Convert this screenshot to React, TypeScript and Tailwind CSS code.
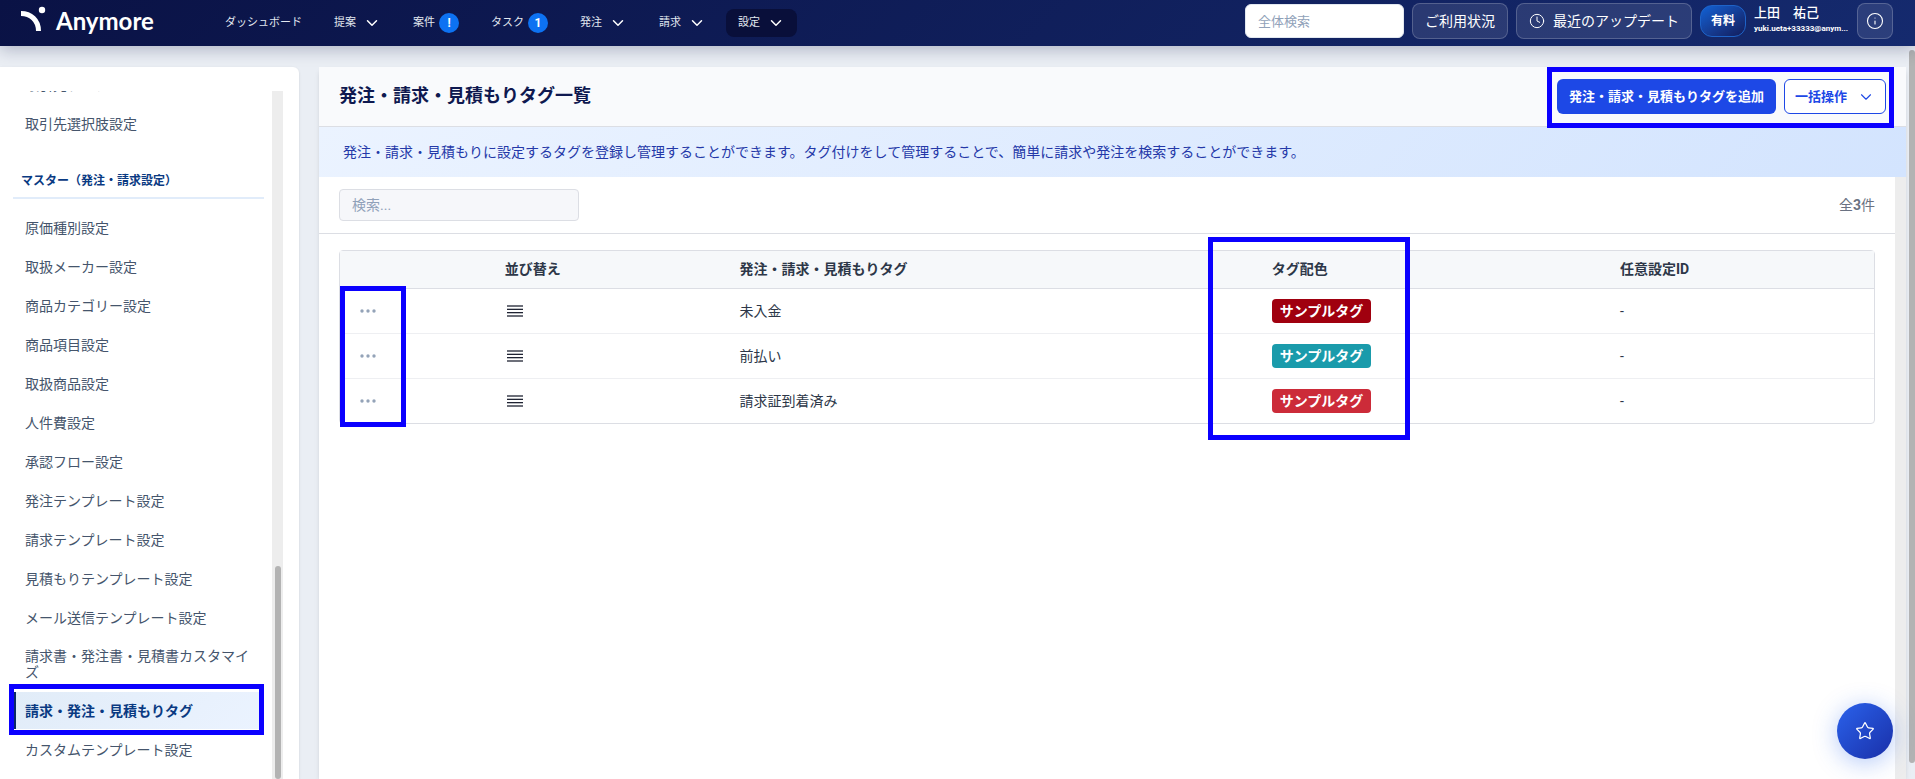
import React, { useState } from 'react';
import { ChevronDown, Clock, Info, Star } from 'lucide-react';

interface NavItem {
  label: string;
  badge?: string;
  menu?: boolean;
  active?: boolean;
}

interface Tag {
  id: number;
  name: string;
  color: string;
}

const navItems: NavItem[] = [
  { label: 'ダッシュボード' },
  { label: '提案', menu: true },
  { label: '案件', badge: '!' },
  { label: 'タスク', badge: '1' },
  { label: '発注', menu: true },
  { label: '請求', menu: true },
  { label: '設定', menu: true, active: true },
];

const masterLinks = [
  '原価種別設定',
  '取扱メーカー設定',
  '商品カテゴリー設定',
  '商品項目設定',
  '取扱商品設定',
  '人件費設定',
  '承認フロー設定',
  '発注テンプレート設定',
  '請求テンプレート設定',
  '見積もりテンプレート設定',
  'メール送信テンプレート設定',
  '請求書・発注書・見積書カスタマイズ',
  '請求・発注・見積もりタグ',
  'カスタムテンプレート設定',
];

const currentLink = '請求・発注・見積もりタグ';

const tags: Tag[] = [
  { id: 1, name: '未入金', color: 'bg-[#a0000f]' },
  { id: 2, name: '前払い', color: 'bg-[#1a9bab]' },
  { id: 3, name: '請求証到着済み', color: 'bg-[#cc2b39]' },
];

const Logo: React.FC = () => (
  <a href="#" className="flex items-center gap-2.5 text-white" aria-label="Anymore">
    <svg width="26" height="26" viewBox="0 0 26 26" fill="none">
      <path d="M1 7.5C10.5 7.5 18.5 14 18.5 25" stroke="currentColor" strokeWidth="5" />
      <circle cx="22" cy="4" r="3.2" fill="currentColor" />
    </svg>
    <span className="pt-1 font-[Lato] text-2xl leading-8 font-bold">Anymore</span>
  </a>
);

const DragIcon: React.FC = () => (
  <svg width="16" height="12" viewBox="0 0 16 12" fill="#1f2333">
    <path fillOpacity="0.65" d="M0 0h16v2H0zM0 10h16v2H0z" />
    <path fillOpacity="0.3" d="M0 3h16v1H0zM0 8h16v1H0z" />
    <path d="M0 4h16v1H0zM0 7h16v1H0z" />
  </svg>
);

const DotsIcon: React.FC = () => (
  <svg width="16" height="4" viewBox="0 0 16 4" fill="#94a3b8">
    <circle cx="2" cy="2" r="1.7" />
    <circle cx="8" cy="2" r="1.7" />
    <circle cx="14" cy="2" r="1.7" />
  </svg>
);

const Header: React.FC = () => (
  <header className="relative z-10 flex h-[46px] items-center justify-between bg-linear-135 from-[#0a1245] to-[#152a6e] pr-[22px] pl-5 shadow-[0_4px_16px_rgba(10,18,69,0.25)]">
    <div className="flex items-center">
      <div className="w-[193px] pb-2">
        <Logo />
      </div>
      <nav className="flex items-center gap-2">
        {navItems.map(item => (
          <a
            key={item.label}
            href="#"
            className={`flex h-7 items-center rounded-lg px-3 text-[11px] text-slate-200 ${item.active ? 'bg-[#090f3a]' : ''}`}
          >
            {item.label}
            {item.badge && (
              <span className="ml-1 flex size-5 items-center justify-center rounded-full bg-[#0d72f2] text-xs font-bold text-white">
                {item.badge}
              </span>
            )}
            {item.menu && <ChevronDown className="ml-[7px] size-[18px] text-white" strokeWidth={2} />}
          </a>
        ))}
      </nav>
    </div>
    <div className="flex items-center gap-2 pb-1 text-white">
      <input
        type="text"
        aria-label="全体検索"
        placeholder="全体検索"
        className="h-[34px] w-[159px] rounded-md border border-slate-200 bg-white px-3 text-[13px] text-slate-700 placeholder:text-slate-400"
      />
      <button className="h-9 rounded-lg border border-white/20 bg-white/10 px-3 text-sm">ご利用状況</button>
      <button className="flex h-9 items-center gap-2 rounded-lg border border-white/20 bg-white/10 px-3 text-sm">
        <Clock className="size-4" strokeWidth={1.5} />
        最近のアップデート
      </button>
      <span className="flex h-8 items-center rounded-xl border border-[#1e63c8] bg-linear-to-br from-[#0f62d6] to-[#111d5c] px-2.5 text-xs font-bold">
        有料
      </span>
      <div className="w-[95px] whitespace-nowrap">
        <p className="text-[13px] leading-4 font-medium">上田　祐己</p>
        <p className="text-[8px] leading-4 font-bold">yuki.ueta+33333@anym...</p>
      </div>
      <button
        aria-label="インフォメーション"
        className="flex size-9 items-center justify-center rounded-lg border border-white/20 bg-white/10"
      >
        <Info className="size-[18px]" strokeWidth={1.5} />
      </button>
    </div>
  </header>
);

const Sidebar: React.FC = () => (
  <aside className="w-[299px] shrink-0 overflow-hidden rounded-tr-md bg-white pt-6 shadow-sm">
    <div className="flex h-full pr-4">
      <div className="flex-1 overflow-hidden pr-2 pl-[13px]">
        {/* scrolled part way down, so the first entry is cut off at the top */}
        <div className="-mt-[26px]">
          <a href="#" className="flex h-[39px] items-center px-3 text-sm text-slate-600">
            取引先テンプレート
          </a>
          <a href="#" className="flex h-[39px] items-center px-3 text-sm text-slate-600">
            取引先選択肢設定
          </a>
        </div>
        <h2 className="mt-[14px] border-b-2 border-[#e1ecfa] px-2 pt-4 pb-2 text-xs leading-4 font-bold text-[#0a3a82]">
          マスター（発注・請求設定）
        </h2>
        <ul className="mt-2.5 flex flex-col gap-0.5">
          {masterLinks.map(label => {
            const isCurrent = label === currentLink;
            return (
              <li key={label} className="relative">
                <a
                  href="#"
                  aria-current={isCurrent ? 'page' : undefined}
                  className={`flex min-h-[37px] items-center px-3 py-2.5 text-sm leading-4 ${
                    isCurrent
                      ? 'border-l-3 border-[#0a2a66] bg-linear-135 from-[#e1ecf8] to-[#ebf3ff] pl-[9px] font-bold text-[#0a3a82]'
                      : 'text-slate-600'
                  }`}
                >
                  {label}
                </a>
                {isCurrent && (
                  <span className="pointer-events-none absolute -top-2 right-0 -bottom-1.5 -left-1 border-5 border-[#0b00ff]" />
                )}
              </li>
            );
          })}
        </ul>
      </div>
      <div className="w-[11px] bg-[#ededed] pt-[475px]">
        <div className="mx-auto h-full w-1.5 rounded-full bg-[#b3b3b3]" />
      </div>
    </div>
  </aside>
);

const TagTable: React.FC = () => (
  <div className="relative rounded-sm border border-[#dcdee4]">
    <table className="w-full table-fixed text-left text-sm text-[#2d3748]">
      <colgroup>
        <col className="w-[9.7%]" />
        <col className="w-[15.3%]" />
        <col className="w-[34.7%]" />
        <col className="w-[22.7%]" />
        <col />
      </colgroup>
      <thead>
        <tr className="h-[37px] border-b border-[#dcdee4] bg-[#f6f8fa]">
          <th aria-label="操作" />
          <th className="px-4 font-bold">並び替え</th>
          <th className="px-4 font-bold">発注・請求・見積もりタグ</th>
          <th className="relative px-4 font-bold">
            タグ配色
            <span className="pointer-events-none absolute -top-3.5 -left-12 h-[203px] w-[202px] border-5 border-[#0b00ff]" />
          </th>
          <th className="px-4 font-bold">任意設定ID</th>
        </tr>
      </thead>
      <tbody>
        {tags.map(tag => (
          <tr key={tag.id} className="h-[45px] border-b border-[#eeeff2] last:border-b-0">
            <td className="px-5">
              <button aria-label={`${tag.name}の操作`} className="block py-2">
                <DotsIcon />
              </button>
            </td>
            <td className="px-[18px]">
              <DragIcon />
            </td>
            <td className="px-4">{tag.name}</td>
            <td className="px-4">
              <span className={`inline-flex h-6 items-center rounded-sm px-2 font-bold text-white ${tag.color}`}>
                サンプルタグ
              </span>
            </td>
            <td className="px-4">-</td>
          </tr>
        ))}
      </tbody>
    </table>
    <span className="pointer-events-none absolute top-[35px] -bottom-1 left-0 w-[66px] border-5 border-[#0b00ff]" />
  </div>
);

const App: React.FC = () => {
  const [keyword, setKeyword] = useState('');

  return (
    <div className="flex h-screen flex-col overflow-hidden bg-[#eaeef4] font-['Roboto','Noto_Sans_CJK_JP',sans-serif]">
      <Header />
      <div className="flex min-h-0 flex-1">
        <div className="flex min-w-0 flex-1 gap-5 pt-[21px] pr-[3px]">
          <Sidebar />
          <main className="flex min-w-0 flex-1 flex-col shadow-md">
            <div className="flex items-center justify-between border-b border-[#dcdee4] bg-[#f9fafc] px-5 py-3">
              <h1 className="pb-0.5 text-lg font-bold text-[#0f1950]">発注・請求・見積もりタグ一覧</h1>
              <div className="relative flex gap-2">
                <button className="h-[35px] rounded-md bg-[#1d48e6] px-3 text-[13px] font-bold text-white">
                  発注・請求・見積もりタグを追加
                </button>
                <button className="flex h-[35px] items-center gap-2.5 rounded-md border border-[#1d48e6] bg-white px-2.5 text-[13px] font-bold text-[#1d48e6]">
                  一括操作
                  <ChevronDown className="size-[18px]" strokeWidth={1.5} />
                </button>
                <span className="pointer-events-none absolute -top-3 -right-2 -bottom-3.5 -left-2.5 border-5 border-[#0b00ff]" />
              </div>
            </div>
            <p className="bg-linear-135 from-[#ebf3ff] to-[#d3e4fe] px-6 py-[15px] text-sm text-[#2438a8]">
              発注・請求・見積もりに設定するタグを登録し管理することができます。タグ付けをして管理することで、簡単に請求や発注を検索することができます。
            </p>
            <div className="flex flex-1">
              <div className="flex-1 bg-white">
                <div className="flex items-center justify-between border-b border-[#dcdee4] px-5 py-3">
                  <input
                    type="text"
                    aria-label="検索"
                    placeholder="検索..."
                    value={keyword}
                    onChange={e => setKeyword(e.target.value)}
                    className="h-8 w-[240px] rounded-sm border border-[#dcdee4] bg-[#f6f7fa] px-3 text-sm placeholder:text-slate-400"
                  />
                  <p className="text-sm text-gray-500">
                    全<b>3</b>件
                  </p>
                </div>
                <div className="px-5 py-4">
                  <TagTable />
                </div>
              </div>
              <div className="w-[11px] bg-[#ededed]" />
            </div>
          </main>
        </div>
        <div className="w-1.5 pt-1 pb-4">
          <div className="h-full rounded-full bg-[#b3b3b3]" />
        </div>
      </div>
      <button
        aria-label="お気に入り"
        className="fixed right-[22px] bottom-5 flex size-14 items-center justify-center rounded-full bg-linear-to-br from-[#2b62ec] to-[#1a2fa8] text-white shadow-[0_4px_24px_rgba(37,99,235,0.35)]"
      >
        <Star className="size-5" strokeWidth={1.5} />
      </button>
    </div>
  );
};

export default App;
